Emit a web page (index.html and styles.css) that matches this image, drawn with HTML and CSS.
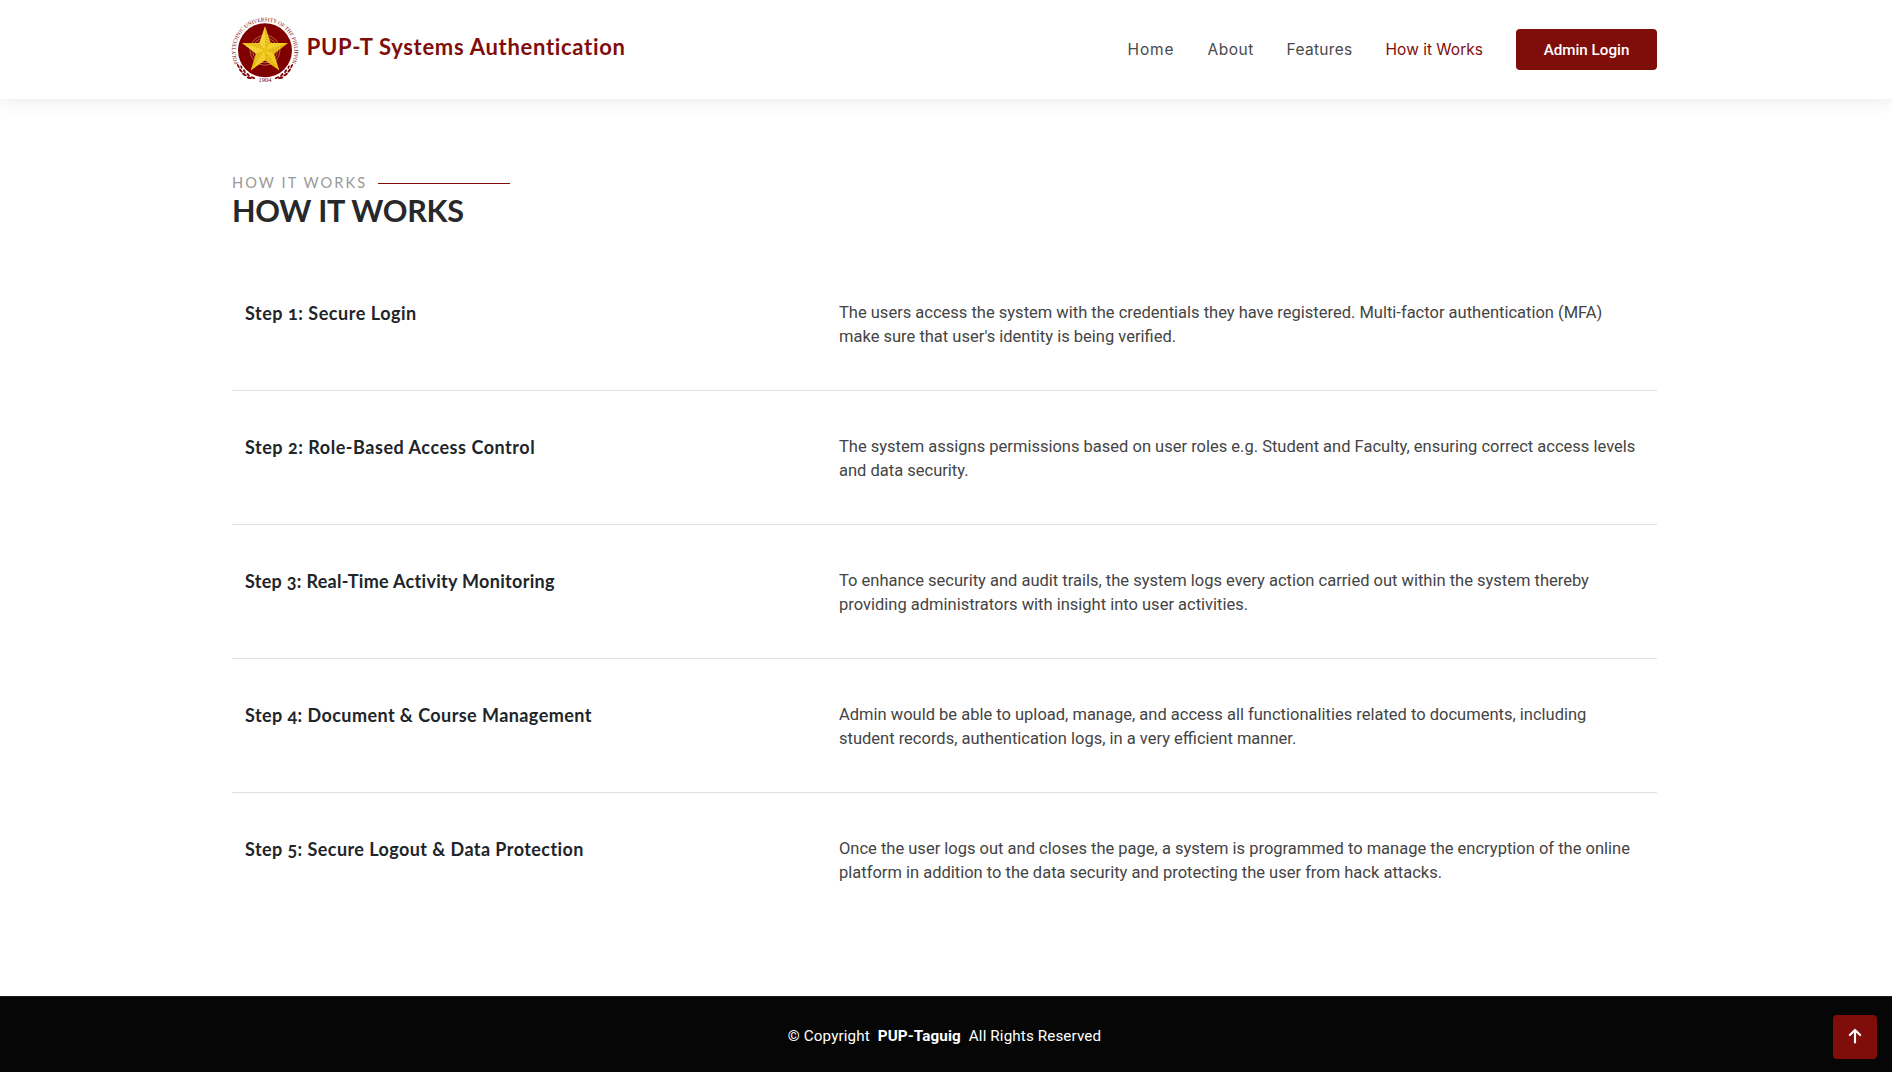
FILE: index.html
```
<!DOCTYPE html>
<html lang="en">
<head>
<meta charset="utf-8">
<title>PUP-T Systems Authentication</title>
<link rel="stylesheet" href="styles.css">
</head>
<body>
<header class="header">
  <div class="container header-inner">
    <a class="logo" href="#">
      <svg class="seal" viewBox="0 0 68 68" aria-hidden="true">
        <defs>
          <path id="ring" d="M7.5 47.5A29.4 29.4 0 1 1 60.5 47.5"/>
          <linearGradient id="gold" x1="0" y1="0" x2="1" y2="1">
            <stop offset="0" stop-color="#f5dc3c"/>
            <stop offset="1" stop-color="#f2c500"/>
          </linearGradient>
          <clipPath id="starClip"><path d="M34 10L39.6 27L57 27L43 37.8L48.3 54.5L34 44.2L19.7 54.5L25 37.8L11 27L28.4 27Z"/></clipPath>
        </defs>
        <circle cx="34" cy="34.3" r="27" fill="#800000"/>
        <path d="M34 10L39.6 27L57 27L43 37.8L48.3 54.5L34 44.2L19.7 54.5L25 37.8L11 27L28.4 27Z" fill="url(#gold)"/>
        <g clip-path="url(#starClip)" fill="#d8a400" fill-opacity=".55">
          <path d="M34 34.3L34 10L39.6 27Z"/><path d="M34 34.3L57 27L43 37.8Z"/><path d="M34 34.3L48.3 54.5L34 44.2Z"/><path d="M34 34.3L19.7 54.5L25 37.8Z"/><path d="M34 34.3L11 27L28.4 27Z"/>
        </g>
        <g fill="none" stroke="#f3d98a" stroke-width=".6" stroke-opacity=".75">
          <circle cx="34" cy="34.3" r="4"/><circle cx="34" cy="34.3" r="7"/><circle cx="34" cy="34.3" r="10"/><circle cx="34" cy="34.3" r="12.5"/><circle cx="34" cy="34.3" r="15"/>
        </g>
        <text class="seal-text"><textPath href="#ring" textLength="124" lengthAdjust="spacingAndGlyphs">POLYTECHNIC UNIVERSITY OF THE PHILIPPINES</textPath></text>
        <g id="laurel" fill="#800000">
          <ellipse cx="7.3" cy="50" rx="2.3" ry=".9" transform="rotate(62 7.3 50)"/>
          <ellipse cx="10.4" cy="51" rx="1.9" ry=".9" transform="rotate(70 10.4 51)"/>
          <ellipse cx="9.8" cy="54.6" rx="2.5" ry="1" transform="rotate(50 9.8 54.6)"/>
          <ellipse cx="13.4" cy="55.2" rx="2.1" ry="1" transform="rotate(60 13.4 55.2)"/>
          <ellipse cx="13.4" cy="58.6" rx="2.6" ry="1.1" transform="rotate(32 13.4 58.6)"/>
          <ellipse cx="17.2" cy="58.8" rx="2.2" ry="1" transform="rotate(50 17.2 58.8)"/>
          <ellipse cx="18.4" cy="61.8" rx="2.8" ry="1.1" transform="rotate(10 18.4 61.8)"/>
          <ellipse cx="22" cy="61.6" rx="2.4" ry=".9" transform="rotate(25 22 61.6)"/>
        </g>
        <use href="#laurel" transform="translate(68 0) scale(-1 1)"/>
        <text class="seal-year" x="34" y="66.2" text-anchor="middle" textLength="13" lengthAdjust="spacingAndGlyphs">1904</text>
      </svg>
      <span class="sitename">PUP-T Systems Authentication</span>
    </a>
    <nav class="nav">
      <a class="home" href="#">Home</a>
      <a class="about" href="#">About</a>
      <a class="features" href="#">Features</a>
      <a class="works active" href="#">How it Works</a>
      <a class="btn-login" href="#">Admin Login</a>
    </nav>
  </div>
</header>
<main class="container main">
  <div class="section-title">
    <p class="eyebrow">HOW IT WORKS</p>
    <h2>HOW IT WORKS</h2>
  </div>
  <section class="steps">
    <div class="step"><h3>Step 1: Secure Login</h3><p>The users access the system with the credentials they have registered. Multi-factor authentication (MFA)<br>make sure that user's identity is being verified.</p></div>
    <div class="step"><h3>Step 2: Role-Based Access Control</h3><p>The system assigns permissions based on user roles e.g. Student and Faculty, ensuring correct access levels<br>and data security.</p></div>
    <div class="step"><h3>Step 3: Real-Time Activity Monitoring</h3><p>To enhance security and audit trails, the system logs every action carried out within the system thereby<br>providing administrators with insight into user activities.</p></div>
    <div class="step"><h3>Step 4: Document &amp; Course Management</h3><p>Admin would be able to upload, manage, and access all functionalities related to documents, including<br>student records, authentication logs, in a very efficient manner.</p></div>
    <div class="step"><h3>Step 5: Secure Logout &amp; Data Protection</h3><p>Once the user logs out and closes the page, a system is programmed to manage the encryption of the online<br>platform in addition to the data security and protecting the user from hack attacks.</p></div>
  </section>
</main>
<footer class="footer">
  <span>© Copyright</span><strong>PUP-Taguig</strong><span>All Rights Reserved</span>
</footer>
<a class="scroll-top" href="#" aria-label="Back to top">
  <svg viewBox="0 0 16 16" aria-hidden="true"><path d="M8 13.8V2.8M3.4 7.2L8 2.6L12.6 7.2" fill="none" stroke="#fff" stroke-width="1.9" stroke-linecap="round" stroke-linejoin="round"/></svg>
</a>
</body>
</html>
```
FILE: styles.css
```
* { box-sizing: border-box; }
html, body { height: 100%; }
body {
  margin: 0;
  display: flex;
  flex-direction: column;
  background: #fff;
  color: #444;
  font: 16.5px/24.5px Roboto, sans-serif;
  overflow: hidden;
}
a { color: inherit; text-decoration: none; }
h2, h3, p { margin: 0; }
.container { width: 1425px; margin: 0 auto; position: relative; left: -1.5px; }

.header {
  height: 99px;
  flex: none;
  background: #fff;
  box-shadow: 0 0 19px rgba(0, 0, 0, .1);
}
.header-inner { height: 100%; display: flex; align-items: center; justify-content: space-between; }
.logo { display: flex; align-items: center; }
.seal { width: 68px; height: 68px; margin-left: -.8px; overflow: visible; }
.seal-text { font: 400 5.6px "Liberation Serif", serif; fill: #800000; }
.seal-year { font: 400 7px "Liberation Serif", serif; fill: #800000; }
.sitename {
  margin: 0 0 5px 7.5px;
  font: 700 22px/28px Lato, sans-serif;
  letter-spacing: .7px;
  color: #7f0e0b;
  white-space: nowrap;
}
.nav {
  display: flex;
  align-items: center;
  gap: 33px;
  font: 15.5px/24px Inter, sans-serif;
  color: #4a4a4a;
  white-space: nowrap;
}
.nav a:not(.btn-login) { padding-left: .6px; }
.home { width: 47px; letter-spacing: .8px; }
.about { width: 46px; letter-spacing: .5px; }
.features { width: 66px; letter-spacing: .3px; }
.works { width: 98px; letter-spacing: 0; }
.nav .active { color: #7f0e0b; }
.btn-login {
  width: 141px;
  height: 41px;
  border-radius: 4px;
  background: #7f0e0b;
  color: #fff;
  font: 500 15.2px/42px Roboto, sans-serif;
  text-align: center;
}

.main { flex: 1; padding-top: 72px; }
.section-title { height: 86px; }
.eyebrow {
  display: flex;
  align-items: center;
  gap: 11px;
  font: 14.6px/24px Lato, sans-serif;
  letter-spacing: 2.05px;
  color: #999;
}
.eyebrow::after { content: ""; width: 132px; height: 1px; background: #7f0e0b; }
.section-title h2 {
  font: 700 30.6px/32px Lato, sans-serif;
  letter-spacing: -.25px;
  color: #272829;
}
.step {
  height: 134px;
  display: grid;
  grid-template-columns: 594px 1fr;
  padding: 43px 0 0 13px;
  border-bottom: 1px solid #dee2e6;
}
.step:last-child { border-bottom: 0; }
.step h3 {
  font: 700 18px/27px Lato, sans-serif;
  font-variant-numeric: oldstyle-nums;
  letter-spacing: .43px;
  color: #212529;
}
.step:nth-child(1) h3, .step:nth-child(2) h3 { letter-spacing: .53px; }
.step:nth-child(3) h3 { letter-spacing: .3px; }
.step p { white-space: nowrap; padding-top: .5px; }

.footer {
  height: 76px;
  flex: none;
  display: flex;
  align-items: center;
  justify-content: center;
  gap: 8px;
  padding: 4px 3px 0 0;
  border-top: 1px solid #1b1b1b;
  background: #060606;
  color: #fff;
  font-size: 15.2px;
  letter-spacing: .12px;
}
.scroll-top {
  position: fixed;
  right: 15px;
  bottom: 13px;
  width: 44px;
  height: 44px;
  display: flex;
  align-items: center;
  justify-content: center;
  border-radius: 4px;
  background: #7f0e0b;
}
.scroll-top svg { width: 18px; height: 18px; margin: -3px 1px 0 0; }
```
